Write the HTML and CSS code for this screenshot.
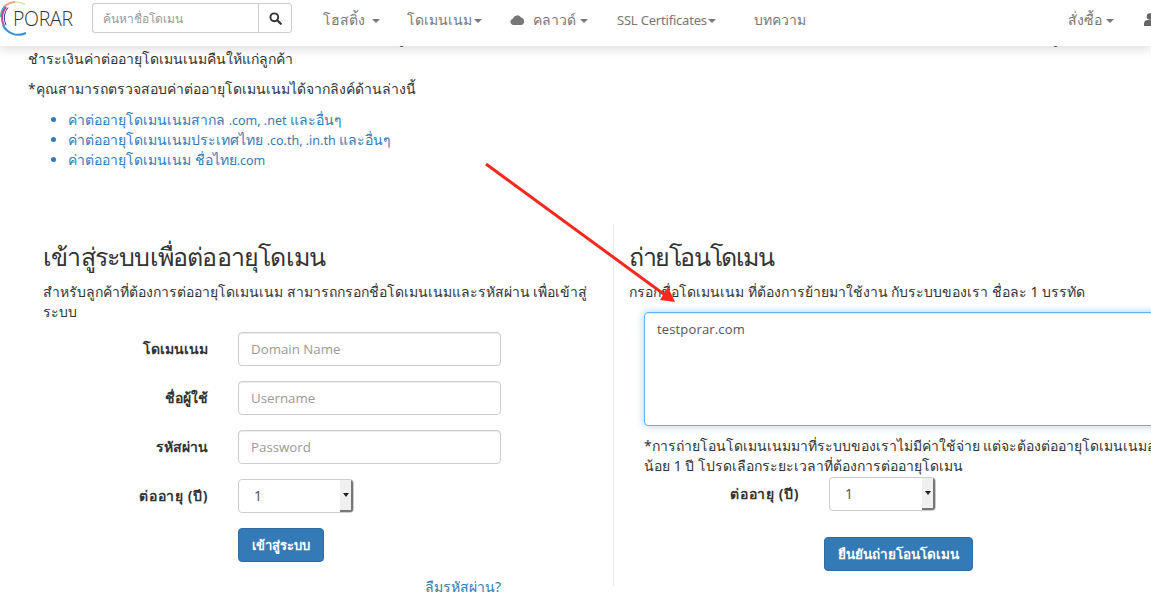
FILE: index.html
```
<!DOCTYPE html>
<html lang="th">
<head>
<meta charset="utf-8">
<title>ต่ออายุโดเมน</title>
<link rel="stylesheet" href="styles.css">
</head>
<body>
<header class="nav">
  <a class="logo">
    <svg class="logo-ring" width="34" height="38" viewBox="0 0 34 38" aria-hidden="true">
      <path d="M25 3.5A17 17 0 0 0 15 1" fill="none" stroke="#d9e39a" stroke-width="1.5"/>
      <path d="M15 1A17 17 0 0 0 5 5" fill="none" stroke="#e8a27c" stroke-width="2"/>
      <path d="M5 5A17 17 0 0 0 1 16" fill="none" stroke="#5fb3a6" stroke-width="2"/>
      <path d="M6 6A17 17 0 0 0 4 25" fill="none" stroke="#c23f9f" stroke-width="2"/>
      <path d="M8 6.5A16 16 0 0 0 6 24" fill="none" stroke="#2c3f8f" stroke-width="1"/>
      <path d="M3 24A17 17 0 0 0 26 32" fill="none" stroke="#2f93d6" stroke-width="2"/>
    </svg>
    <span class="logo-text">PORAR</span>
  </a>
  <div class="search">
    <input class="search-input" type="text" placeholder="ค้นหาชื่อโดเมน">
    <button class="search-btn" type="button" aria-label="ค้นหา">
      <svg width="13" height="13" viewBox="0 0 13 13" aria-hidden="true"><circle cx="5.3" cy="5.3" r="3.9" fill="none" stroke="#333" stroke-width="1.9"/><path d="M8.2 8.2l3.6 3.6" stroke="#333" stroke-width="2.2" stroke-linecap="round"/></svg>
    </button>
  </div>
  <nav class="menu">
    <a class="item w1">โฮสติ้ง <i class="caret"></i></a>
    <a class="item w2">โดเมนเนม <i class="caret"></i></a>
    <a class="item w3"><svg class="cloud" width="15" height="11" viewBox="0 0 15 11" aria-hidden="true"><path d="M3.5 11a3.2 3.2 0 0 1-.6-6.3A4.4 4.4 0 0 1 11 3.6 3.8 3.8 0 0 1 11.3 11z" fill="#777"/></svg> คลาวด์ <i class="caret"></i></a>
    <a class="item ssl">SSL Certificates<i class="caret"></i></a>
    <a class="item">บทความ</a>
  </nav>
  <div class="menu-right">
    <a class="item">สั่งซื้อ <i class="caret"></i></a>
    <svg class="user" width="12" height="13" viewBox="0 0 12 13" aria-hidden="true"><circle cx="6" cy="3.5" r="3.3" fill="#666"/><path d="M0 13V10a4 4 0 0 1 4-3h4a4 4 0 0 1 4 3v3z" fill="#666"/></svg>
  </div>
</header>

<main class="page">
  <section class="intro">
    <p class="intro-line"><span class="tail tail-a">หากการย้ายไม่สำเร็จ ระบบจะแจ้งให้ตรวจสอบข้อมู</span><span class="tail tail-b">ทางอีเมล พร้อมทั้งดำเนินการตามเงื่อนไขของการให้บริการและประสานงานเพื่อแจ้งผลทันที ข้อมู</span></p>
    <p class="intro-line">ชำระเงินค่าต่ออายุโดเมนเนมคืนให้แก่ลูกค้า</p>
    <p class="intro-note">*คุณสามารถตรวจสอบค่าต่ออายุโดเมนเนมได้จากลิงค์ด้านล่างนี้</p>
    <ul class="links">
      <li class="link"><a>ค่าต่ออายุโดเมนเนมสากล <span class="latin">.com, .net</span> และอื่นๆ</a></li>
      <li class="link"><a>ค่าต่ออายุโดเมนเนมประเทศไทย <span class="latin">.co.th, .in.th</span> และอื่นๆ</a></li>
      <li class="link"><a>ค่าต่ออายุโดเมนเนม ชื่อไทย<span class="latin">.com</span></a></li>
    </ul>
  </section>

  <section class="cols">
    <div class="col-left">
      <h2 class="title">เข้าสู่ระบบเพื่อต่ออายุโดเมน</h2>
      <p class="lead">สำหรับลูกค้าที่ต้องการต่ออายุโดเมนเนม สามารถกรอกชื่อโดเมนเนมและรหัสผ่าน เพื่อเข้าสู่ระบบ</p>
      <form class="form">
        <label class="lbl">โดเมนเนม</label><input class="field" type="text" placeholder="Domain Name">
        <label class="lbl">ชื่อผู้ใช้</label><input class="field" type="text" placeholder="Username">
        <label class="lbl">รหัสผ่าน</label><input class="field" type="password" placeholder="Password">
        <label class="lbl lbl-year">ต่ออายุ (ปี)</label>
        <div class="select"><span class="select-val">1</span><span class="spin"><i class="spin-caret"></i></span></div>
        <div class="btn-cell"><button class="btn btn-login" type="button">เข้าสู่ระบบ</button></div>
        <div class="forgot"><a>ลืมรหัสผ่าน?</a></div>
      </form>
    </div>
    <div class="col-right">
      <h2 class="title">ถ่ายโอนโดเมน</h2>
      <p class="lead">กรอกชื่อโดเมนเนม ที่ต้องการย้ายมาใช้งาน กับระบบของเรา ชื่อละ 1 บรรทัด</p>
      <div class="transfer">
        <div class="textarea">testporar.com</div>
        <p class="note">*การถ่ายโอนโดเมนเนมมาที่ระบบของเราไม่มีค่าใช้จ่าย แต่จะต้องต่ออายุโดเมนเนมอย่าง<br>น้อย 1 ปี โปรดเลือกระยะเวลาที่ต้องการต่ออายุโดเมน</p>
        <div class="year-row">
          <label class="lbl lbl-year">ต่ออายุ (ปี)</label>
          <div class="select"><span class="select-val">1</span><span class="spin"><i class="spin-caret"></i></span></div>
        </div>
        <div class="confirm"><button class="btn btn-confirm" type="button">ยืนยันถ่ายโอนโดเมน</button></div>
      </div>
    </div>
  </section>
</main>

<svg class="arrow" width="200" height="150" viewBox="480 160 200 150" aria-hidden="true">
  <path d="M486 164L665 295" stroke="#f8281e" stroke-width="3"/>
  <path d="M675 302L660 300L668 287z" fill="#f8281e"/>
</svg>
</body>
</html>
```
FILE: styles.css
```
* { box-sizing: border-box; }
html, body { margin: 0; height: 601px; overflow: hidden; }
body { font-family: "Noto Sans", "Liberation Sans", sans-serif; font-size: 14px; line-height: 20px; color: #333; background: #fff; position: relative; }
p { margin: 0; }
a { color: inherit; text-decoration: none; }

.nav { position: absolute; top: 0; left: 0; width: 1151px; height: 46px; padding-bottom: 10px; background: #fff; box-shadow: 0 3px 10px rgba(0,0,0,.14); display: flex; align-items: center; z-index: 2; white-space: nowrap; }
.logo { position: relative; width: 92px; height: 36px; display: flex; align-items: center; flex: none; }
.logo-ring { position: absolute; left: 0; top: 1px; }
.logo-text { margin: 2px 0 0 13px; font-size: 19.5px; font-weight: 300; color: #333; letter-spacing: -.3px; font-family: "Open Sans", sans-serif; }
.search { display: flex; width: 200px; height: 30px; flex: none; }
.search-input { flex: 1; min-width: 0; border: 1px solid #ccc; border-right: 0; border-radius: 3px 0 0 3px; padding: 0 10px; font: 12px "Noto Sans", sans-serif; color: #555; }
.search-input::placeholder { color: #999; }
.search-btn { width: 34px; border: 1px solid #ccc; border-radius: 0 3px 3px 0; background: #fff; padding: 0; display: flex; align-items: center; justify-content: center; }
.menu { display: flex; margin: 3px 0 0 31px; }
.item { color: #777; font-size: 14px; display: flex; align-items: center; gap: 4px; }
.w1 { width: 84px; gap: 7px; } .w2 { width: 103px; gap: 2px; } .w3 { width: 107px; gap: 4px; }
.ssl { width: 137px; font-size: 13px; letter-spacing: -.2px; gap: 1px; }
.caret { display: inline-block; width: 0; height: 0; border-top: 4px solid #777; border-left: 4px solid transparent; border-right: 4px solid transparent; margin-top: 2px; }
.menu-right { margin: 3px -5px 0 auto; display: flex; align-items: center; gap: 30px; }
.cloud { flex: none; margin-right: 4px; }

.page { padding-top: 27px; }
.intro { padding-left: 28px; }
.intro-line { height: 21px; line-height: 21px; white-space: nowrap; }
.tail { display: inline-block; overflow: hidden; text-align: right; vertical-align: top; height: 24px; }
.tail-a { width: 376px; }
.tail-b { width: 654px; }
.intro-note { margin-top: 10px; }
.links { margin: 11px 0 0; padding-left: 40px; color: #337ab7; }
.link { height: 20px; line-height: 20px; }
.latin { font-size: 12.5px; line-height: 1; }

.cols { display: flex; margin-top: 54px; }
.col-left { width: 586px; margin-left: 28px; padding: 14px 15px 0; border-right: 1px solid #eee; height: 362px; flex: none; }
.col-right { width: 600px; padding: 14px 0 0 15px; flex: none; }
.title { margin: 0 0 8px; font-size: 25px; line-height: 36px; font-weight: 400; color: #333; }
.col-left .title { letter-spacing: -.8px; }
.col-right .title { letter-spacing: -1.4px; }
.lead { width: 552px; }
.form { display: grid; grid-template-columns: 165px 263px; column-gap: 30px; row-gap: 15px; margin-top: 10px; align-items: center; }
.lbl { font-weight: 700; text-align: right; }
.lbl-year { letter-spacing: .6px; }
.field { height: 34px; border: 1px solid #ccc; border-radius: 4px; padding: 6px 12px; font: 13.3px "Open Sans", "Noto Sans", sans-serif; color: #555; box-shadow: inset 0 1px 1px rgba(0,0,0,.075); }
.field::placeholder { color: #999; }
.select { width: 116px; height: 34px; border: 1px solid #ccc; border-radius: 4px; display: flex; justify-content: space-between; padding-left: 15px; align-items: center; color: #555; overflow: hidden; }
.select-val { font-size: 14px; }
.spin { width: 13px; height: 32px; background: #f0f0f0; border-right: 2px solid #777; border-bottom: 2px solid #777; display: flex; align-items: center; justify-content: center; }
.spin-caret { width: 0; height: 0; border-top: 4px solid #222; border-left: 3px solid transparent; border-right: 3px solid transparent; }
.btn { height: 34px; border: 1px solid #2e6da4; border-radius: 4px; background: #337ab7; color: #fff; font: 700 13.5px "Noto Sans", sans-serif; padding: 0; }
.btn-cell { grid-column: 2; }
.btn-login { width: 86px; font-size: 13px; }
.forgot { grid-column: 2; text-align: right; color: #337ab7; }

.transfer { padding-left: 15px; }
.textarea { width: 540px; height: 114px; margin-top: 10px; border: 1px solid #66afe9; border-radius: 4px; padding: 6px 12px; font: 13px/20px "Open Sans", sans-serif; letter-spacing: .15px; color: #555; box-shadow: inset 0 1px 1px rgba(0,0,0,.075), 0 0 8px rgba(102,175,233,.6); }
.note { margin-top: 10px; width: 507px; line-height: 20px; white-space: nowrap; overflow: hidden; }
.year-row { display: flex; align-items: center; margin-top: 1px; }
.year-row .lbl { width: 155px; }
.year-row .select { width: 107px; margin-left: 30px; }
.confirm { padding-left: 180px; margin-top: 26px; }
.btn-confirm { width: 149px; }
.arrow { position: absolute; left: 480px; top: 160px; z-index: 1; pointer-events: none; }
```
